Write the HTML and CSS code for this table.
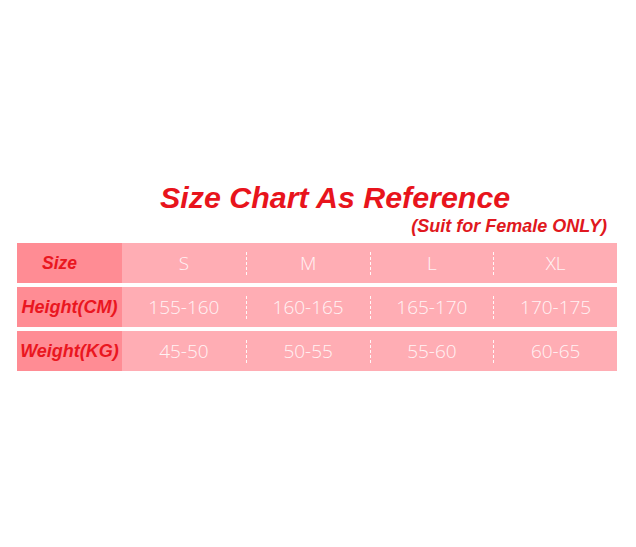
FILE: index.html
```html
<!DOCTYPE html>
<html>
<head>
<meta charset="utf-8">
<link rel="stylesheet" href="styles.css">
</head>
<body>
<div class="chart">
  <h1 class="title">Size Chart As Reference</h1>
  <p class="subtitle">(Suit for Female ONLY)</p>
  <div class="table">
    <div class="row">
      <div class="label label-size">Size</div>
      <div class="cell">S</div>
      <div class="cell cell-div">M</div>
      <div class="cell cell-div">L</div>
      <div class="cell cell-div">XL</div>
    </div>
    <div class="row">
      <div class="label">Height(CM)</div>
      <div class="cell">155-160</div>
      <div class="cell cell-div">160-165</div>
      <div class="cell cell-div">165-170</div>
      <div class="cell cell-div">170-175</div>
    </div>
    <div class="row">
      <div class="label">Weight(KG)</div>
      <div class="cell">45-50</div>
      <div class="cell cell-div">50-55</div>
      <div class="cell cell-div">55-60</div>
      <div class="cell cell-div">60-65</div>
    </div>
  </div>
</div>
</body>
</html>
```
FILE: styles.css
```css
html, body {
  margin: 0;
  padding: 0;
  background: #ffffff;
}
body {
  font-family: "Liberation Sans", Arial, sans-serif;
}
.chart {
  width: 600px;
  padding: 182px 0 0 17px;
}
.title {
  margin: 0;
  padding-left: 143px;
  font-size: 30.4px;
  line-height: 30px;
  font-weight: bold;
  font-style: italic;
  color: #e8141c;
}
.subtitle {
  margin: 5px 0 0 0;
  text-align: right;
  padding-right: 10px;
  font-size: 18px;
  line-height: 18px;
  font-weight: bold;
  font-style: italic;
  color: #e01820;
}
.table {
  margin-top: 8px;
  display: flex;
  flex-direction: column;
  gap: 4px;
}
.row {
  display: grid;
  grid-template-columns: 105px repeat(4, 1fr);
  height: 40px;
  background: #ffadb4;
}
.label {
  background: #ff8c94;
  color: #ea1620;
  font-size: 18px;
  font-weight: bold;
  font-style: italic;
  display: flex;
  align-items: center;
  justify-content: center;
}
.label-size {
  padding-right: 20px;
  font-size: 17.5px;
}
.cell {
  align-self: center;
  height: 23px;
  line-height: 23px;
  text-align: center;
  font-family: "Open Sans", sans-serif;
  font-weight: 300;
  font-size: 19px;
  color: #fff3f4;
}
.cell-div {
  border-left: 1px dashed rgba(255, 255, 255, 0.9);
}
```
